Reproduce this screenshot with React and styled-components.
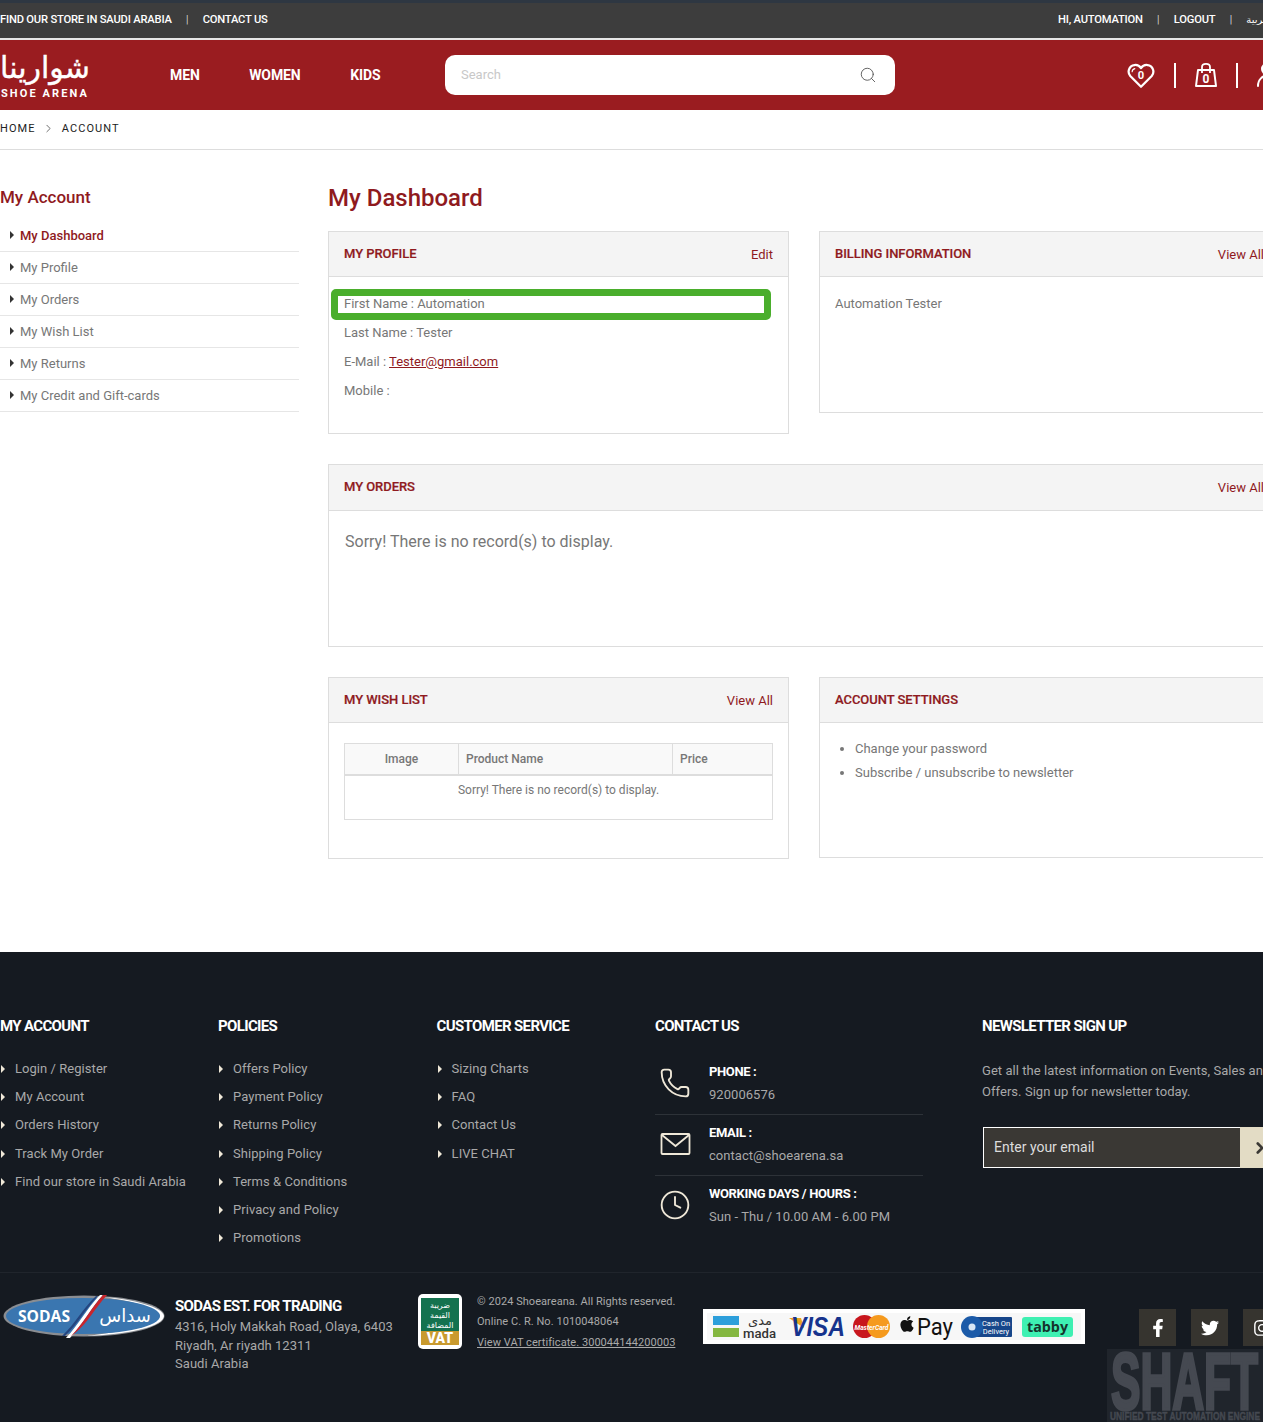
import React from "react";
import styled, { createGlobalStyle } from "styled-components";
import { Phone, Clock, ChevronRight, Search } from "lucide-react";
import { FaApple, FaFacebookF, FaTwitter, FaInstagram } from "react-icons/fa";

const RED = "#8f1a1e";
const GREY = "#777";
const FOOT_TEXT = "#a9a9a9";
const CREAM = "#efe8d8";

const accountLinks = ["My Dashboard", "My Profile", "My Orders", "My Wish List", "My Returns", "My Credit and Gift-cards"];
const footerColumns = [
  { title: "MY ACCOUNT", links: ["Login / Register", "My Account", "Orders History", "Track My Order", "Find our store in Saudi Arabia"] },
  { title: "POLICIES", links: ["Offers Policy", "Payment Policy", "Returns Policy", "Shipping Policy", "Terms & Conditions", "Privacy and Policy", "Promotions"] },
  { title: "CUSTOMER SERVICE", links: ["Sizing Charts", "FAQ", "Contact Us", "LIVE CHAT"] },
];

const HeartIcon = () => (
  <svg width="28" height="27" viewBox="0 0 30 28" fill="none">
    <path d="M15 26 L3.5 14.5 C0 10.5 2 3.5 8 2.8 C11 2.4 13.5 3.8 15 6 C16.5 3.8 19 2.4 22 2.8 C28 3.5 30 10.5 26.5 14.5 Z" stroke="#fff" strokeWidth="2.4" strokeLinejoin="round" />
    <path d="M5.5 10 C5.6 8.2 6.6 7 8.4 6.6" stroke="#fff" strokeWidth="1.2" strokeLinecap="round" />
    <text x="15" y="18" textAnchor="middle" fontFamily="Roboto" fontWeight="700" fontSize="12" fill="#fff">0</text>
  </svg>
);

const BagIcon = () => (
  <svg width="22" height="26" viewBox="0 0 22 26" fill="none">
    <path d="M3 8 H19 L21 24 H1 Z" stroke="#fff" strokeWidth="2" strokeLinejoin="round" />
    <path d="M7 11 V5 C7 0.8 15 0.8 15 5 V11" stroke="#fff" strokeWidth="1.8" />
    <text x="11" y="20.5" textAnchor="middle" fontFamily="Roboto" fontWeight="700" fontSize="12" fill="#fff">0</text>
  </svg>
);

const UserIcon = () => (
  <svg width="24" height="26" viewBox="0 0 24 26" fill="none">
    <circle cx="10.5" cy="7" r="5.5" stroke="#fff" strokeWidth="2" />
    <path d="M1 24 C1 10 21 10 21 24" stroke="#fff" strokeWidth="2" strokeLinecap="round" />
  </svg>
);

const MailIcon = () => (
  <svg width="32" height="32" viewBox="0 0 32 32" fill="none">
    <rect x="2.5" y="6" width="28" height="20" rx="1" stroke={CREAM} strokeWidth="1.8" />
    <path d="M3 7 L16.5 18 L30 7" stroke={CREAM} strokeWidth="1.8" />
  </svg>
);

const contacts = [
  { label: "PHONE :", value: "920006576", icon: <Phone size={32} strokeWidth={1.4} color={CREAM} /> },
  { label: "EMAIL :", value: "contact@shoearena.sa", icon: <MailIcon /> },
  { label: "WORKING DAYS / HOURS :", value: "Sun - Thu / 10.00 AM - 6.00 PM", icon: <Clock size={32} strokeWidth={1.4} color={CREAM} /> },
];

const SodasLogo = () => (
  <svg width="162" height="46" viewBox="0 0 162 46">
    <ellipse cx="81" cy="22" rx="80.5" ry="20.5" fill="#8a8d92" />
    <path d="M100 3 C130 5 160 13 161 22 C160 32 130 40 84 42 C125 37 155 30 157 22 C155 14 130 7 100 3 Z" fill="#fff" />
    <ellipse cx="80" cy="22" rx="77" ry="18" fill="#3a76b0" />
    <path d="M63 44 C76 30 84 14 97 1 L100 1 C88 14 80 30 67 44 Z" fill="#fff" />
    <path d="M68 42 C80 30 88 14 100 1 L104 1 C92 14 84 30 72 39 Z" fill="#c9252c" />
    <path d="M59 42 C72 30 80 14 93 2 L95 2 C83 14 75 30 62 42 Z" fill="#24457f" />
    <text x="15" y="27.5" fontFamily="Open Sans" fontWeight="700" fontSize="16" fill="#fff" textLength="52" lengthAdjust="spacingAndGlyphs">SODAS</text>
    <text x="122" y="28" textAnchor="middle" fontFamily="DejaVu Sans" fontSize="18" fill="#fff">سداس</text>
  </svg>
);

const VatBadge = () => (
  <svg width="44" height="55" viewBox="0 0 44 55">
    <rect width="44" height="55" rx="5" fill="#fff" />
    <rect x="3" y="4" width="38" height="33" fill="#14724f" />
    <rect x="3" y="37" width="38" height="14" fill="#c99a2e" />
    <text x="22" y="14" textAnchor="middle" fontFamily="DejaVu Sans" fontSize="8" fill="#fff">ضريبة</text>
    <text x="22" y="24" textAnchor="middle" fontFamily="DejaVu Sans" fontSize="8" fill="#fff">القيمة</text>
    <text x="22" y="34" textAnchor="middle" fontFamily="DejaVu Sans" fontSize="8" fill="#fff">المضافة</text>
    <text x="22" y="49" textAnchor="middle" fontFamily="Roboto" fontWeight="900" fontSize="14" fill="#fff">VAT</text>
  </svg>
);

const PaymentStrip = () => (
  <svg width="382" height="35" viewBox="0 0 382 35">
    <rect width="382" height="35" fill="#fff" />
    <rect x="4" y="4" width="374" height="27" fill="#f7f7f7" />
    <rect x="10" y="7" width="26" height="9" fill="#2d9fdb" />
    <rect x="10" y="19" width="26" height="9" fill="#84b740" />
    <text x="57" y="15.5" textAnchor="middle" fontFamily="DejaVu Sans" fontSize="13" fill="#333">مدى</text>
    <text x="40" y="28.5" fontFamily="Roboto" fontWeight="500" fontSize="13" fill="#333" textLength="33" lengthAdjust="spacingAndGlyphs">mada</text>
    <path d="M86 9 L98 9 L101 19 Z" fill="#e8a322" />
    <text x="88" y="27" fontFamily="Liberation Sans" fontWeight="700" fontStyle="italic" fontSize="27" fill="#16338d" textLength="54" lengthAdjust="spacingAndGlyphs">VISA</text>
    <circle cx="161.5" cy="17.5" r="11.5" fill="#c8161d" />
    <circle cx="175.5" cy="17.5" r="11.5" fill="#f59a1e" />
    <text x="168.5" y="20.5" textAnchor="middle" fontFamily="Roboto" fontWeight="700" fontStyle="italic" fontSize="8" fill="#fff" textLength="34" lengthAdjust="spacingAndGlyphs">MasterCard</text>
    <FaApple x="195" y="6" size={18} color="#111" />
    <text x="214" y="26" fontFamily="Roboto" fontSize="24" fill="#111" textLength="36" lengthAdjust="spacingAndGlyphs">Pay</text>
    <rect x="268" y="8" width="41" height="20" rx="1" fill="#17468a" />
    <circle cx="269" cy="18" r="11" fill="#1b5aa8" />
    <circle cx="269" cy="18" r="3.5" fill="#d8e6f5" />
    <text x="293" y="17" textAnchor="middle" fontFamily="Roboto" fontSize="7.5" fill="#fff">Cash On</text>
    <text x="293" y="24.5" textAnchor="middle" fontFamily="Roboto" fontSize="7.5" fill="#fff">Delivery</text>
    <rect x="319" y="8" width="51" height="20" rx="3" fill="#3ef0b2" />
    <text x="344.5" y="23" textAnchor="middle" fontFamily="Open Sans" fontWeight="700" fontSize="15" fill="#15342c" textLength="41" lengthAdjust="spacingAndGlyphs">tabby</text>
  </svg>
);

const ShaftMark = () => (
  <svg width="156" height="73" viewBox="0 0 156 73">
    <rect width="156" height="73" fill="#3b3f47" opacity="0.3" />
    <text x="4" y="60" fontFamily="Liberation Sans" fontWeight="700" fontSize="80" fill="#454951" stroke="#454951" strokeWidth="3.5" textLength="147" lengthAdjust="spacingAndGlyphs">SHAFT</text>
    <text x="3" y="71" fontFamily="Liberation Sans" fontWeight="700" fontSize="11" fill="#454951" stroke="#454951" strokeWidth="0.4" textLength="150" lengthAdjust="spacingAndGlyphs">UNIFIED TEST AUTOMATION ENGINE</text>
  </svg>
);

export default function App() {
  return (
    <>
      <GlobalStyle />
      <Page>
        <TopBar>
          <TopGroup>
            <TopLink>FIND OUR STORE IN SAUDI ARABIA</TopLink>
            <TopSep>|</TopSep>
            <TopLink>CONTACT US</TopLink>
          </TopGroup>
          <TopGroup>
            <TopLink>HI, AUTOMATION</TopLink>
            <TopSep>|</TopSep>
            <TopLink>LOGOUT</TopLink>
            <TopSep>|</TopSep>
            <TopArabic lang="ar">عربية</TopArabic>
          </TopGroup>
        </TopBar>

        <Header>
          <Logo>
            <LogoArabic lang="ar">شوارينا</LogoArabic>
            <LogoLatin>SHOE ARENA</LogoLatin>
          </Logo>
          <Nav>
            <NavLink>MEN</NavLink>
            <NavLink>WOMEN</NavLink>
            <NavLink>KIDS</NavLink>
          </Nav>
          <SearchBox>
            <SearchText>Search</SearchText>
            <Search size={18} strokeWidth={1.2} color="#555" />
          </SearchBox>
          <HeaderIcons>
            <HeartIcon />
            <IconDivider />
            <BagIcon />
            <IconDivider />
            <UserIcon />
          </HeaderIcons>
        </Header>

        <Breadcrumb>
          <span>HOME</span>
          <ChevronRight size={13} strokeWidth={1.3} color="#333" />
          <span>ACCOUNT</span>
        </Breadcrumb>

        <Main>
          <Sidebar>
            <SideTitle>My Account</SideTitle>
            <SideList>
              {accountLinks.map((link, i) => (
                <SideItem key={link} $active={i === 0}>{link}</SideItem>
              ))}
            </SideList>
          </Sidebar>

          <Content>
            <PageTitle>My Dashboard</PageTitle>
            <CardGrid>
              <Card $height={203}>
                <CardHead>
                  <CardTitle>MY PROFILE</CardTitle>
                  <CardLink>Edit</CardLink>
                </CardHead>
                <ProfileBody>
                  <HighlightRow>First Name : Automation</HighlightRow>
                  <ProfileRow>Last Name : Tester</ProfileRow>
                  <ProfileRow>E-Mail : <MailLink>Tester@gmail.com</MailLink></ProfileRow>
                  <ProfileRow>Mobile :</ProfileRow>
                </ProfileBody>
              </Card>

              <Card $height={182}>
                <CardHead>
                  <CardTitle>BILLING INFORMATION</CardTitle>
                  <CardLink>View All</CardLink>
                </CardHead>
                <ProfileBody>
                  <ProfileRow>Automation Tester</ProfileRow>
                </ProfileBody>
              </Card>

              <Card $height={183} $wide>
                <CardHead $tall>
                  <CardTitle>MY ORDERS</CardTitle>
                  <CardLink>View All</CardLink>
                </CardHead>
                <EmptyOrders>Sorry! There is no record(s) to display.</EmptyOrders>
              </Card>

              <Card $height={182}>
                <CardHead>
                  <CardTitle>MY WISH LIST</CardTitle>
                  <CardLink>View All</CardLink>
                </CardHead>
                <TableBody>
                  <WishTable>
                    <thead>
                      <tr>
                        <HeadCell $center $width={114}>Image</HeadCell>
                        <HeadCell $width={214}>Product Name</HeadCell>
                        <HeadCell>Price</HeadCell>
                      </tr>
                    </thead>
                    <tbody>
                      <tr>
                        <EmptyCell colSpan={3}>Sorry! There is no record(s) to display.</EmptyCell>
                      </tr>
                    </tbody>
                  </WishTable>
                </TableBody>
              </Card>

              <Card $height={181}>
                <CardHead>
                  <CardTitle>ACCOUNT SETTINGS</CardTitle>
                </CardHead>
                <SettingsList>
                  <li>Change your password</li>
                  <li>Subscribe / unsubscribe to newsletter</li>
                </SettingsList>
              </Card>
            </CardGrid>
          </Content>
        </Main>

        <Footer>
          <FooterTop>
            {footerColumns.map((col) => (
              <div key={col.title}>
                <FooterTitle>{col.title}</FooterTitle>
                <FooterList>
                  {col.links.map((link) => (
                    <FooterItem key={link}>{link}</FooterItem>
                  ))}
                </FooterList>
              </div>
            ))}
            <div>
              <FooterTitle>CONTACT US</FooterTitle>
              <ContactList>
                {contacts.map(({ label, value, icon }) => (
                  <ContactRow key={label}>
                    <ContactIcon>{icon}</ContactIcon>
                    <div>
                      <ContactLabel>{label}</ContactLabel>
                      <ContactValue>{value}</ContactValue>
                    </div>
                  </ContactRow>
                ))}
              </ContactList>
            </div>
            <div>
              <FooterTitle>NEWSLETTER SIGN UP</FooterTitle>
              <NewsText>Get all the latest information on Events, Sales and Offers. Sign up for newsletter today.</NewsText>
              <NewsForm>
                <NewsInput>Enter your email</NewsInput>
                <NewsButton><ChevronRight size={18} strokeWidth={3.5} color="#3a3834" /></NewsButton>
              </NewsForm>
            </div>
          </FooterTop>

          <FooterBottom>
            <SodasLogo />
            <Company>
              <CompanyName>SODAS EST. FOR TRADING</CompanyName>
              <CompanyLine>4316, Holy Makkah Road, Olaya, 6403</CompanyLine>
              <CompanyLine>Riyadh, Ar riyadh 12311</CompanyLine>
              <CompanyLine>Saudi Arabia</CompanyLine>
            </Company>
            <VatWrap><VatBadge /></VatWrap>
            <Legal>
              <LegalLine>© 2024 Shoeareana. All Rights reserved.</LegalLine>
              <LegalLine>Online C. R. No. 1010048064</LegalLine>
              <LegalLine $link>View VAT certificate. 300044144200003</LegalLine>
            </Legal>
            <PaymentWrap><PaymentStrip /></PaymentWrap>
            <Socials>
              <SocialButton><FaFacebookF /></SocialButton>
              <SocialButton><FaTwitter /></SocialButton>
              <SocialButton><FaInstagram /></SocialButton>
            </Socials>
          </FooterBottom>

          <Watermark><ShaftMark /></Watermark>
        </Footer>
      </Page>
    </>
  );
}

const GlobalStyle = createGlobalStyle`
  html, body {
    margin: 0;
    padding: 0;
    overflow: hidden;
    background: #fff;
  }
  body {
    font-family: "Roboto", "Liberation Sans", sans-serif;
  }
  *, *::before, *::after {
    box-sizing: border-box;
  }
`;

const Page = styled.div`
  width: 1263px;
  height: 1422px;
  overflow: hidden;
`;

const TopBar = styled.div`
  display: flex;
  justify-content: space-between;
  align-items: center;
  width: 1280px;
  height: 40px;
  padding: 0 11px 3px 0;
  background: #3d3d3d;
  border-top: 3px solid #2e3742;
  border-bottom: 2px solid #e6e6e6;
  color: #fff;
`;

const TopGroup = styled.div`
  display: flex;
  align-items: center;
`;

const TopLink = styled.span`
  font-size: 11.2px;
  font-weight: 500;
  letter-spacing: -0.2px;
`;

const TopArabic = styled.span`
  font-family: "DejaVu Sans", sans-serif;
  font-size: 10px;
`;

const TopSep = styled.span`
  margin: 0 14.25px;
  font-size: 11px;
  font-weight: 300;
`;

const Header = styled.header`
  display: flex;
  align-items: center;
  width: 1280px;
  height: 70px;
  background: #9a1c20;
  color: #fff;
`;

const Logo = styled.div`
  display: flex;
  flex: 0 0 170px;
  flex-direction: column;
`;

const LogoArabic = styled.span`
  width: 90px;
  font-family: "DejaVu Sans", sans-serif;
  font-size: 30px;
  line-height: 38px;
  text-align: center;
  -webkit-text-stroke: 0.4px #fff;
`;

const LogoLatin = styled.span`
  padding-left: 1px;
  font-size: 11px;
  font-weight: 700;
  line-height: 14px;
  letter-spacing: 2.1px;
`;

const Nav = styled.nav`
  display: flex;
  flex: 0 0 275px;
  gap: 49.5px;
`;

const NavLink = styled.span`
  font-size: 14px;
  font-weight: 700;
  letter-spacing: -0.1px;
`;

const SearchBox = styled.div`
  display: flex;
  flex: 0 0 450px;
  justify-content: space-between;
  align-items: center;
  height: 40px;
  padding: 0 18px 0 16px;
  background: #fff;
  border-radius: 10px;
`;

const SearchText = styled.span`
  padding-bottom: 2px;
  color: #c8c8c8;
  font-size: 13px;
`;

const HeaderIcons = styled.div`
  display: flex;
  flex: 0 0 auto;
  align-items: center;
  margin-left: 232px;
  gap: 19px;
`;

const IconDivider = styled.span`
  width: 2px;
  height: 25px;
  background: #fff;
`;

const Breadcrumb = styled.div`
  display: flex;
  align-items: center;
  gap: 6.5px;
  height: 40px;
  padding-bottom: 2px;
  border-bottom: 1px solid #ddd;
  color: #222;
  font-size: 11px;
  letter-spacing: 1.1px;
`;

const Main = styled.main`
  display: flex;
  gap: 29px;
  width: 1280px;
  padding: 30px 0 93px;
`;

const Sidebar = styled.aside`
  flex: 0 0 299px;
`;

const SideTitle = styled.h3`
  margin: 0 0 6px;
  color: ${RED};
  font-size: 17px;
  font-weight: 500;
  line-height: 34px;
`;

const SideList = styled.ul`
  margin: 0;
  padding: 0;
  list-style: none;
`;

const SideItem = styled.li`
  position: relative;
  height: 32px;
  padding-left: 20px;
  border-bottom: 1px solid #e6e6e6;
  color: ${(p) => (p.$active ? RED : GREY)};
  font-size: 13px;
  font-weight: ${(p) => (p.$active ? 500 : 400)};
  line-height: 31px;

  &::before {
    content: "";
    position: absolute;
    left: 10px;
    top: 11px;
    border-left: 4.5px solid #333;
    border-top: 4px solid transparent;
    border-bottom: 4px solid transparent;
  }
`;

const Content = styled.section`
  flex: 0 0 952px;
`;

const PageTitle = styled.h1`
  margin: 1px 0 16px;
  color: ${RED};
  font-size: 24px;
  font-weight: 500;
  line-height: 34px;
`;

const CardGrid = styled.div`
  display: grid;
  grid-template-columns: 461px 461px;
  gap: 30px;
  align-items: start;
`;

const Card = styled.div`
  grid-column: ${(p) => (p.$wide ? "1 / span 2" : "auto")};
  height: ${(p) => p.$height}px;
  border: 1px solid #ddd;
`;

const CardHead = styled.div`
  display: flex;
  justify-content: space-between;
  align-items: center;
  height: ${(p) => (p.$tall ? 46 : 45)}px;
  padding: 0 15px;
  background: #f4f4f4;
  border-bottom: 1px solid #ddd;

  & > span:last-child:not(:first-child) {
    margin-top: ${(p) => (p.$tall ? 0 : 1)}px;
  }
`;

const CardTitle = styled.span`
  margin-bottom: 2px;
  color: ${RED};
  font-size: 13px;
  font-weight: 500;
  letter-spacing: -0.05px;
  -webkit-text-stroke: 0.2px ${RED};
`;

const CardLink = styled.span`
  color: ${RED};
  font-size: 13px;
`;

const ProfileBody = styled.div`
  padding: 12px 15px 0;
`;

const ProfileRow = styled.div`
  position: relative;
  color: ${GREY};
  font-size: 13px;
  line-height: 29px;
`;

const HighlightRow = styled(ProfileRow)`
  &::after {
    content: "";
    position: absolute;
    left: -13px;
    top: 0;
    width: 440px;
    height: 31px;
    border: 7px solid #4aae2c;
    border-radius: 5px;
  }
`;

const MailLink = styled.a`
  color: ${RED};
  text-decoration: underline;
`;

const EmptyOrders = styled.p`
  margin: 0;
  padding: 20px 16px;
  color: ${GREY};
  font-size: 16px;
  line-height: 21px;
`;

const TableBody = styled.div`
  padding: 20px 15px 0;
`;

const WishTable = styled.table`
  width: 429px;
  border-collapse: collapse;
  table-layout: fixed;
  border: 1px solid #ddd;
`;

const HeadCell = styled.th`
  width: ${(p) => (p.$width ? `${p.$width}px` : "auto")};
  height: 31px;
  padding: 0 7px;
  background: #f9f9f9;
  border: 1px solid #ddd;
  border-bottom: 2px solid #ddd;
  color: ${GREY};
  font-size: 12px;
  font-weight: 500;
  text-align: ${(p) => (p.$center ? "center" : "left")};
`;

const EmptyCell = styled.td`
  height: 45px;
  padding: 7px 0 0;
  color: ${GREY};
  font-size: 12px;
  line-height: 15px;
  text-align: center;
  vertical-align: top;
`;

const SettingsList = styled.ul`
  margin: 0;
  padding: 14px 15px 0 35px;
  color: ${GREY};
  font-size: 13px;
  line-height: 24px;
`;

const Footer = styled.footer`
  position: relative;
  width: 1263px;
  height: 470px;
  background: #151a21;
  overflow: hidden;
`;

const FooterTop = styled.div`
  display: grid;
  grid-template-columns: 218px 218.6px 218.4px 327px 298px;
  width: 1280px;
  height: 321px;
  padding-top: 64px;
  border-bottom: 1px solid #20252c;
`;

const FooterTitle = styled.h4`
  margin: 0 0 23px;
  color: #fff;
  font-size: 15px;
  font-weight: 700;
  line-height: 20px;
  letter-spacing: -0.65px;
`;

const FooterList = styled.ul`
  margin: 0;
  padding: 0;
  list-style: none;
`;

const FooterItem = styled.li`
  position: relative;
  height: 28.2px;
  padding-left: 15px;
  color: ${FOOT_TEXT};
  font-size: 13px;
  line-height: 20px;
  letter-spacing: 0.05px;

  &::before {
    content: "";
    position: absolute;
    left: 1px;
    top: 6px;
    border-left: 4.5px solid ${CREAM};
    border-top: 4px solid transparent;
    border-bottom: 4px solid transparent;
  }
`;

const ContactList = styled.div`
  width: 268px;
  margin-top: -5px;
`;

const ContactRow = styled.div`
  display: flex;
  align-items: center;
  height: 61px;
  padding-bottom: 2px;
  border-bottom: 1px solid #2d3238;

  &:last-child {
    padding-bottom: 3px;
    border-bottom: 0;
  }
`;

const ContactIcon = styled.span`
  display: flex;
  flex: 0 0 54px;
  padding-left: 4px;
`;

const ContactLabel = styled.div`
  color: #fff;
  font-size: 13px;
  font-weight: 700;
  line-height: 23px;
  letter-spacing: -0.35px;
`;

const ContactValue = styled.div`
  color: ${FOOT_TEXT};
  font-size: 13px;
  line-height: 23px;
  letter-spacing: 0.05px;
`;

const NewsText = styled.p`
  margin: 0 0 25px;
  padding-top: 1px;
  color: ${FOOT_TEXT};
  font-size: 13px;
  line-height: 21px;
  letter-spacing: 0.05px;
`;

const NewsForm = styled.div`
  display: flex;
  width: 298px;
  height: 41px;
  margin-left: 1px;
`;

const NewsInput = styled.div`
  flex: 0 0 257px;
  padding-left: 10px;
  background: #3a3834;
  border: 1px solid #fff;
  border-right: 0;
  color: #ddd;
  font-size: 14px;
  line-height: 38px;
`;

const NewsButton = styled.div`
  display: flex;
  flex: 1;
  align-items: center;
  padding-left: 11px;
  background: #e3dcc5;
`;

const FooterBottom = styled.div`
  display: flex;
  width: 1280px;
  padding: 21px 0 0 3px;
`;

const Company = styled.div`
  flex: 0 0 243px;
  margin-left: 10px;
  padding-top: 1px;
`;

const CompanyName = styled.div`
  color: #fff;
  font-size: 15px;
  font-weight: 700;
  line-height: 23px;
  letter-spacing: -0.65px;
`;

const CompanyLine = styled.div`
  color: ${FOOT_TEXT};
  font-size: 13px;
  line-height: 18.5px;
  letter-spacing: 0.05px;
`;

const VatWrap = styled.div`
  flex: 0 0 59px;
`;

const Legal = styled.div`
  flex: 0 0 226px;
  margin-top: -2px;
`;

const LegalLine = styled.div`
  color: ${FOOT_TEXT};
  font-size: 11px;
  line-height: 20.4px;
  letter-spacing: 0.05px;
  text-decoration: ${(p) => (p.$link ? "underline" : "none")};
`;

const PaymentWrap = styled.div`
  flex: 0 0 436px;
  margin-top: 15px;
`;

const Socials = styled.div`
  display: flex;
  gap: 15px;
  margin-top: 15px;
`;

const SocialButton = styled.span`
  display: flex;
  justify-content: center;
  align-items: center;
  width: 37px;
  height: 37px;
  background: #36342f;
  color: #fff;
  font-size: 18px;
`;

const Watermark = styled.div`
  position: absolute;
  right: 0;
  bottom: 0;
  display: flex;
`;
